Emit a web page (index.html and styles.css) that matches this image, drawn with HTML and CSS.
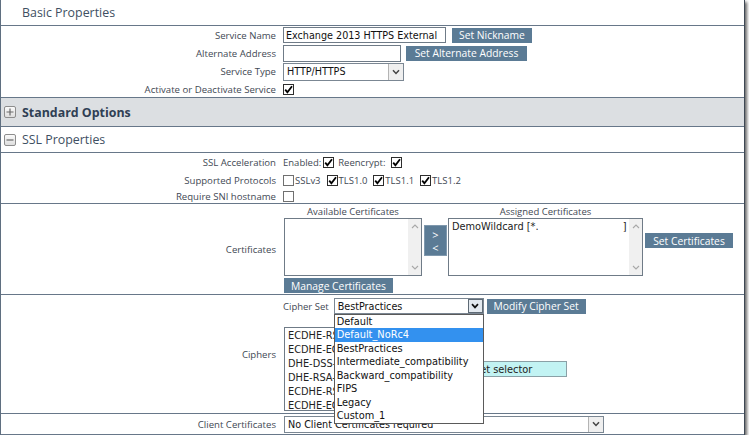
FILE: index.html
```html
<!DOCTYPE html>
<html>
<head>
<meta charset="utf-8">
<title>Virtual Service</title>
<link rel="stylesheet" href="styles.css">
</head>
<body>
<div class="panel">
  <div class="sec-title">Basic Properties</div>

  <div class="form basic">
    <div class="lbl">Service Name</div>
    <div class="ctl">
      <span class="field w-name">Exchange 2013 HTTPS External</span>
      <span class="btn btn-nick">Set Nickname</span>
    </div>
    <div class="lbl">Alternate Address</div>
    <div class="ctl">
      <span class="field w-alt tall"></span>
      <span class="btn btn-alt">Set Alternate Address</span>
    </div>
    <div class="lbl">Service Type</div>
    <div class="ctl">
      <span class="select w-type"><span class="sel-text">HTTP/HTTPS</span><span class="sel-arrow"><svg width="8" height="6" viewBox="0 0 8 6"><path d="M1 1.2 L4 4.4 L7 1.2" fill="none" stroke="#444" stroke-width="1.5"/></svg></span></span>
    </div>
    <div class="lbl">Activate or Deactivate Service</div>
    <div class="ctl"><span class="cb"><svg width="9" height="9" viewBox="0 0 9 9"><path d="M1.2 4.6 L3.4 7.2 L8 1.2" fill="none" stroke="#000" stroke-width="1.8"/></svg></span></div>
  </div>

  <div class="band"><span class="tog"><svg width="8" height="8" viewBox="0 0 8 8"><path d="M0.5 4 H7.5 M4 0.5 V7.5" stroke="#6a6a6a" stroke-width="1.2"/></svg></span>Standard Options</div>

  <div class="sec-title2"><span class="tog"><svg width="8" height="8" viewBox="0 0 8 8"><path d="M0.5 4 H7.5" stroke="#6a6a6a" stroke-width="1.2"/></svg></span>SSL Properties</div>

  <div class="form ssl">
    <div class="lbl">SSL Acceleration</div>
    <div class="ctl">
      <span class="opt">Enabled:</span><span class="cb after-text"><svg width="9" height="9" viewBox="0 0 9 9"><path d="M1.2 4.6 L3.4 7.2 L8 1.2" fill="none" stroke="#000" stroke-width="1.8"/></svg></span>
      <span class="opt spaced">Reencrypt:</span><span class="cb after-text wide"><svg width="9" height="9" viewBox="0 0 9 9"><path d="M1.2 4.6 L3.4 7.2 L8 1.2" fill="none" stroke="#000" stroke-width="1.8"/></svg></span>
    </div>
    <div class="lbl">Supported Protocols</div>
    <div class="ctl">
      <span class="cb off"></span><span class="opt tight">SSLv3</span>
      <span class="cb spaced"><svg width="9" height="9" viewBox="0 0 9 9"><path d="M1.2 4.6 L3.4 7.2 L8 1.2" fill="none" stroke="#000" stroke-width="1.8"/></svg></span><span class="opt tight">TLS1.0</span>
      <span class="cb spaced"><svg width="9" height="9" viewBox="0 0 9 9"><path d="M1.2 4.6 L3.4 7.2 L8 1.2" fill="none" stroke="#000" stroke-width="1.8"/></svg></span><span class="opt tight">TLS1.1</span>
      <span class="cb spaced"><svg width="9" height="9" viewBox="0 0 9 9"><path d="M1.2 4.6 L3.4 7.2 L8 1.2" fill="none" stroke="#000" stroke-width="1.8"/></svg></span><span class="opt tight">TLS1.2</span>
    </div>
    <div class="lbl">Require SNI hostname</div>
    <div class="ctl"><span class="cb off"></span></div>
  </div>

  <div class="form certs">
    <div class="lbl">Certificates</div>
    <div class="cert-col">
      <div class="cert-heads">
        <span class="cert-head h-avail">Available Certificates</span>
        <span class="cert-head h-assign">Assigned Certificates</span>
      </div>
      <div class="cert-lists">
        <div class="listbox lb-avail">
          <div class="lb-items"></div>
          <div class="scroll"><svg width="8" height="5" viewBox="0 0 8 5"><path d="M1 4 L4 1 L7 4" fill="none" stroke="#a8a8a8" stroke-width="1.1"/></svg><svg width="8" height="5" viewBox="0 0 8 5"><path d="M1 1 L4 4 L7 1" fill="none" stroke="#a8a8a8" stroke-width="1.1"/></svg></div>
        </div>
        <div class="movers"><span>&gt;</span><span>&lt;</span></div>
        <div class="listbox lb-assign">
          <div class="lb-items"><div class="lb-item">DemoWildcard [*.<span class="redact"></span>]</div></div>
          <div class="scroll"><svg width="8" height="5" viewBox="0 0 8 5"><path d="M1 4 L4 1 L7 4" fill="none" stroke="#a8a8a8" stroke-width="1.1"/></svg><svg width="8" height="5" viewBox="0 0 8 5"><path d="M1 1 L4 4 L7 1" fill="none" stroke="#a8a8a8" stroke-width="1.1"/></svg></div>
        </div>
        <span class="btn btn-setcert">Set Certificates</span>
      </div>
      <span class="btn btn-manage">Manage Certificates</span>
    </div>
  </div>

  <div class="form ciphers">
    <div class="lbl">Ciphers</div>
    <div class="cipher-col">
      <div class="cipher-set">
        <span class="opt">Cipher Set</span>
        <span class="select w-cipher">
          <span class="sel-text">BestPractices</span>
          <span class="sel-arrow pressed"><svg width="8" height="6" viewBox="0 0 8 6"><path d="M1 1.2 L4 4.4 L7 1.2" fill="none" stroke="#111" stroke-width="1.7"/></svg></span>
          <div class="dropdown">
            <div class="dd-item">Default</div>
            <div class="dd-item sel">Default_NoRc4</div>
            <div class="dd-item">BestPractices</div>
            <div class="dd-item">Intermediate_compatibility</div>
            <div class="dd-item">Backward_compatibility</div>
            <div class="dd-item">FIPS</div>
            <div class="dd-item">Legacy</div>
            <div class="dd-item">Custom_1</div>
          </div>
        </span>
        <span class="btn btn-modify">Modify Cipher Set</span>
      </div>
      <div class="cipher-list-row">
        <div class="listbox lb-ciphers">
          <div class="lb-items">
            <div class="lb-item">ECDHE-RSA-AES256-GCM-SHA384</div>
            <div class="lb-item">ECDHE-ECDSA-AES256-GCM-SHA384</div>
            <div class="lb-item">DHE-DSS-AES256-GCM-SHA384</div>
            <div class="lb-item">DHE-RSA-AES256-GCM-SHA384</div>
            <div class="lb-item">ECDHE-RSA-AES128-GCM-SHA256</div>
            <div class="lb-item">ECDHE-ECDSA-AES128-GCM-SHA256</div>
          </div>
        </div>
        <span class="reset-btn">Reset selector</span>
      </div>
    </div>
  </div>

  <div class="form client">
    <div class="lbl">Client Certificates</div>
    <div class="ctl">
      <span class="select w-client"><span class="sel-text">No Client Certificates required</span><span class="sel-arrow"><svg width="8" height="6" viewBox="0 0 8 6"><path d="M1 1.2 L4 4.4 L7 1.2" fill="none" stroke="#444" stroke-width="1.5"/></svg></span></span>
    </div>
  </div>
</div>
</body>
</html>
```
FILE: styles.css
```css
* { box-sizing: border-box; }

body {
  margin: 0;
  background: #ffffff;
  font-family: "Open Sans", "Liberation Sans", sans-serif;
  color: #3f4954;
}

.panel {
  width: 745px;
  border-left: 1px solid #5f6f80;
  border-right: 1px solid #3e4854;
  box-shadow: 2px 2px 3px rgba(0, 0, 0, 0.6);
  position: relative;
}

.sec-title {
  height: 26px;
  border-bottom: 1px solid #677789;
  padding-left: 21px;
  font-size: 12.4px;
  line-height: 25px;
  color: #3e4f62;
}

.sec-title2 {
  height: 26px;
  border-bottom: 1px solid #677789;
  display: flex;
  align-items: center;
  padding-left: 3px;
  font-size: 12.4px;
  color: #3e4f62;
}

.band {
  height: 29px;
  border-bottom: 1px solid #677789;
  background: #dcdfe2;
  display: flex;
  align-items: center;
  padding-left: 3px;
  font-size: 12.4px;
  font-weight: 700;
  color: #2f4054;
}

.tog {
  width: 12px;
  height: 12px;
  border: 1px solid #8d8d8d;
  border-radius: 2px;
  background: linear-gradient(#fafafa, #dedede);
  display: inline-flex;
  align-items: center;
  justify-content: center;
  margin-right: 6px;
}

.form {
  display: grid;
  grid-template-columns: 282px 1fr;
  border-bottom: 1px solid #677789;
}

.lbl {
  text-align: right;
  padding-right: 7px;
  font-size: 9.6px;
  align-self: center;
  white-space: nowrap;
}

.ctl {
  display: flex;
  align-items: center;
}

.basic { grid-template-rows: 18px 18px 19px 16px; }
.ssl { grid-template-rows: 19px 17px 14px; }

.field {
  display: inline-flex;
  align-items: center;
  height: 16px;
  border: 1px solid #6f7b87;
  padding: 0 2px;
  font-family: "DejaVu Sans Condensed", "DejaVu Sans", sans-serif;
  font-size: 10.7px;
  color: #111;
  white-space: nowrap;
}
.field.tall { height: 17px; }
.w-name { width: 163px; }
.w-alt { width: 118px; }

.btn {
  display: inline-flex;
  align-items: center;
  justify-content: center;
  height: 15px;
  background: #5b7b95;
  color: #ffffff;
  font-size: 10.3px;
  white-space: nowrap;
}
.btn-nick { width: 80px; margin-left: 6px; }
.btn-alt { width: 121px; margin-left: 5px; }
.btn-setcert { width: 88px; margin-left: 2px; align-self: flex-start; margin-top: 15px; }
.btn-manage { width: 109px; margin-top: 2px; }
.btn-modify { width: 99px; margin-left: 3px; }

.select {
  position: relative;
  display: inline-flex;
  align-items: center;
  border: 1px solid #7b8793;
  background: #fff;
  font-family: "DejaVu Sans Condensed", "DejaVu Sans", sans-serif;
  font-size: 10.7px;
  color: #111;
}
.sel-text { flex: 1; padding-left: 3px; white-space: nowrap; }
.sel-arrow {
  width: 15px;
  align-self: stretch;
  display: flex;
  align-items: center;
  justify-content: center;
  background: #efefef;
  border-left: 1px solid #b4b4b4;
}
.sel-arrow.pressed {
  background: #e3e9ef;
  border: 1px solid #5e6a75;
}
.w-type { width: 121px; height: 18px; }
.w-cipher { width: 150px; height: 16px; margin-left: 5px; }
.w-client { width: 320px; height: 17px; margin-left: 1px; }

.cb {
  width: 11px;
  height: 11px;
  border: 1px solid #2d2d2d;
  background: #fff;
  display: inline-flex;
  align-items: center;
  justify-content: center;
  flex: none;
}
.cb.off { border-color: #707070; }
.cb.after-text { margin-left: 2px; }
.cb.wide { margin-left: 5px; }
.cb.spaced { margin-left: 6px; }

.opt {
  font-size: 9.5px;
  white-space: nowrap;
}
.opt.spaced { margin-left: 4px; }
.opt.tight { margin-left: 1px; }

/* Certificates */
.cert-col {
  padding: 2px 0 1px 1px;
  display: flex;
  flex-direction: column;
  align-items: flex-start;
}
.cert-heads {
  display: flex;
  height: 12px;
  font-size: 9.5px;
  line-height: 12px;
}
.cert-head { text-align: center; }
.h-avail { width: 138px; }
.h-assign { width: 195px; margin-left: 26px; }

.cert-lists { display: flex; }

.listbox {
  display: flex;
  border: 1px solid #6f7b87;
  background: #fff;
  font-family: "DejaVu Sans Condensed", "DejaVu Sans", sans-serif;
  font-size: 10.9px;
  color: #222;
}
.lb-items { flex: 1; padding: 1px 3px; overflow: hidden; }
.lb-item { height: 14px; line-height: 14px; white-space: nowrap; }
.scroll {
  width: 13px;
  background: #f0f0f0;
  display: flex;
  flex-direction: column;
  justify-content: space-between;
  align-items: center;
  padding: 5px 0 5px;
}
.lb-avail { width: 138px; height: 58px; }
.lb-assign { width: 195px; height: 58px; }
.redact { display: inline-block; width: 84px; }

.movers {
  width: 23px;
  height: 31px;
  margin: 7px 1px 0 2px;
  background: #5b7b95;
  border: 1px solid #7f98ad;
  color: #fff;
  font-size: 11px;
  display: flex;
  flex-direction: column;
  align-items: center;
  justify-content: center;
  line-height: 13px;
}

/* Ciphers */
.cipher-col {
  padding: 3px 0 2px 1px;
  display: flex;
  flex-direction: column;
}
.cipher-set {
  display: flex;
  align-items: center;
  height: 16px;
  position: relative;
  z-index: 2;
}
.cipher-set .opt { margin-left: -1px; }

.dropdown {
  position: absolute;
  top: 15px;
  left: -1px;
  width: 150px;
  border: 1px solid #5a5a5a;
  background: #fff;
  padding: 0;
}
.dd-item {
  height: 13.45px;
  line-height: 13.45px;
  padding-left: 2px;
  white-space: nowrap;
  color: #111;
  font-size: 10.9px;
}
.dd-item.sel { background: #3391ef; color: #fff; }

.cipher-list-row {
  display: flex;
  align-items: center;
  margin-top: 13px;
}
.lb-ciphers { width: 150px; height: 84px; }
.reset-btn {
  width: 127px;
  height: 16px;
  margin-left: 6px;
  background: #c2f3f3;
  border: 1px solid #8aa0a6;
  font-family: "DejaVu Sans Condensed", "DejaVu Sans", sans-serif;
  font-size: 10.9px;
  color: #222;
  display: flex;
  align-items: center;
  justify-content: center;
  padding-right: 12px;
}

.client { height: 21px; }
```
